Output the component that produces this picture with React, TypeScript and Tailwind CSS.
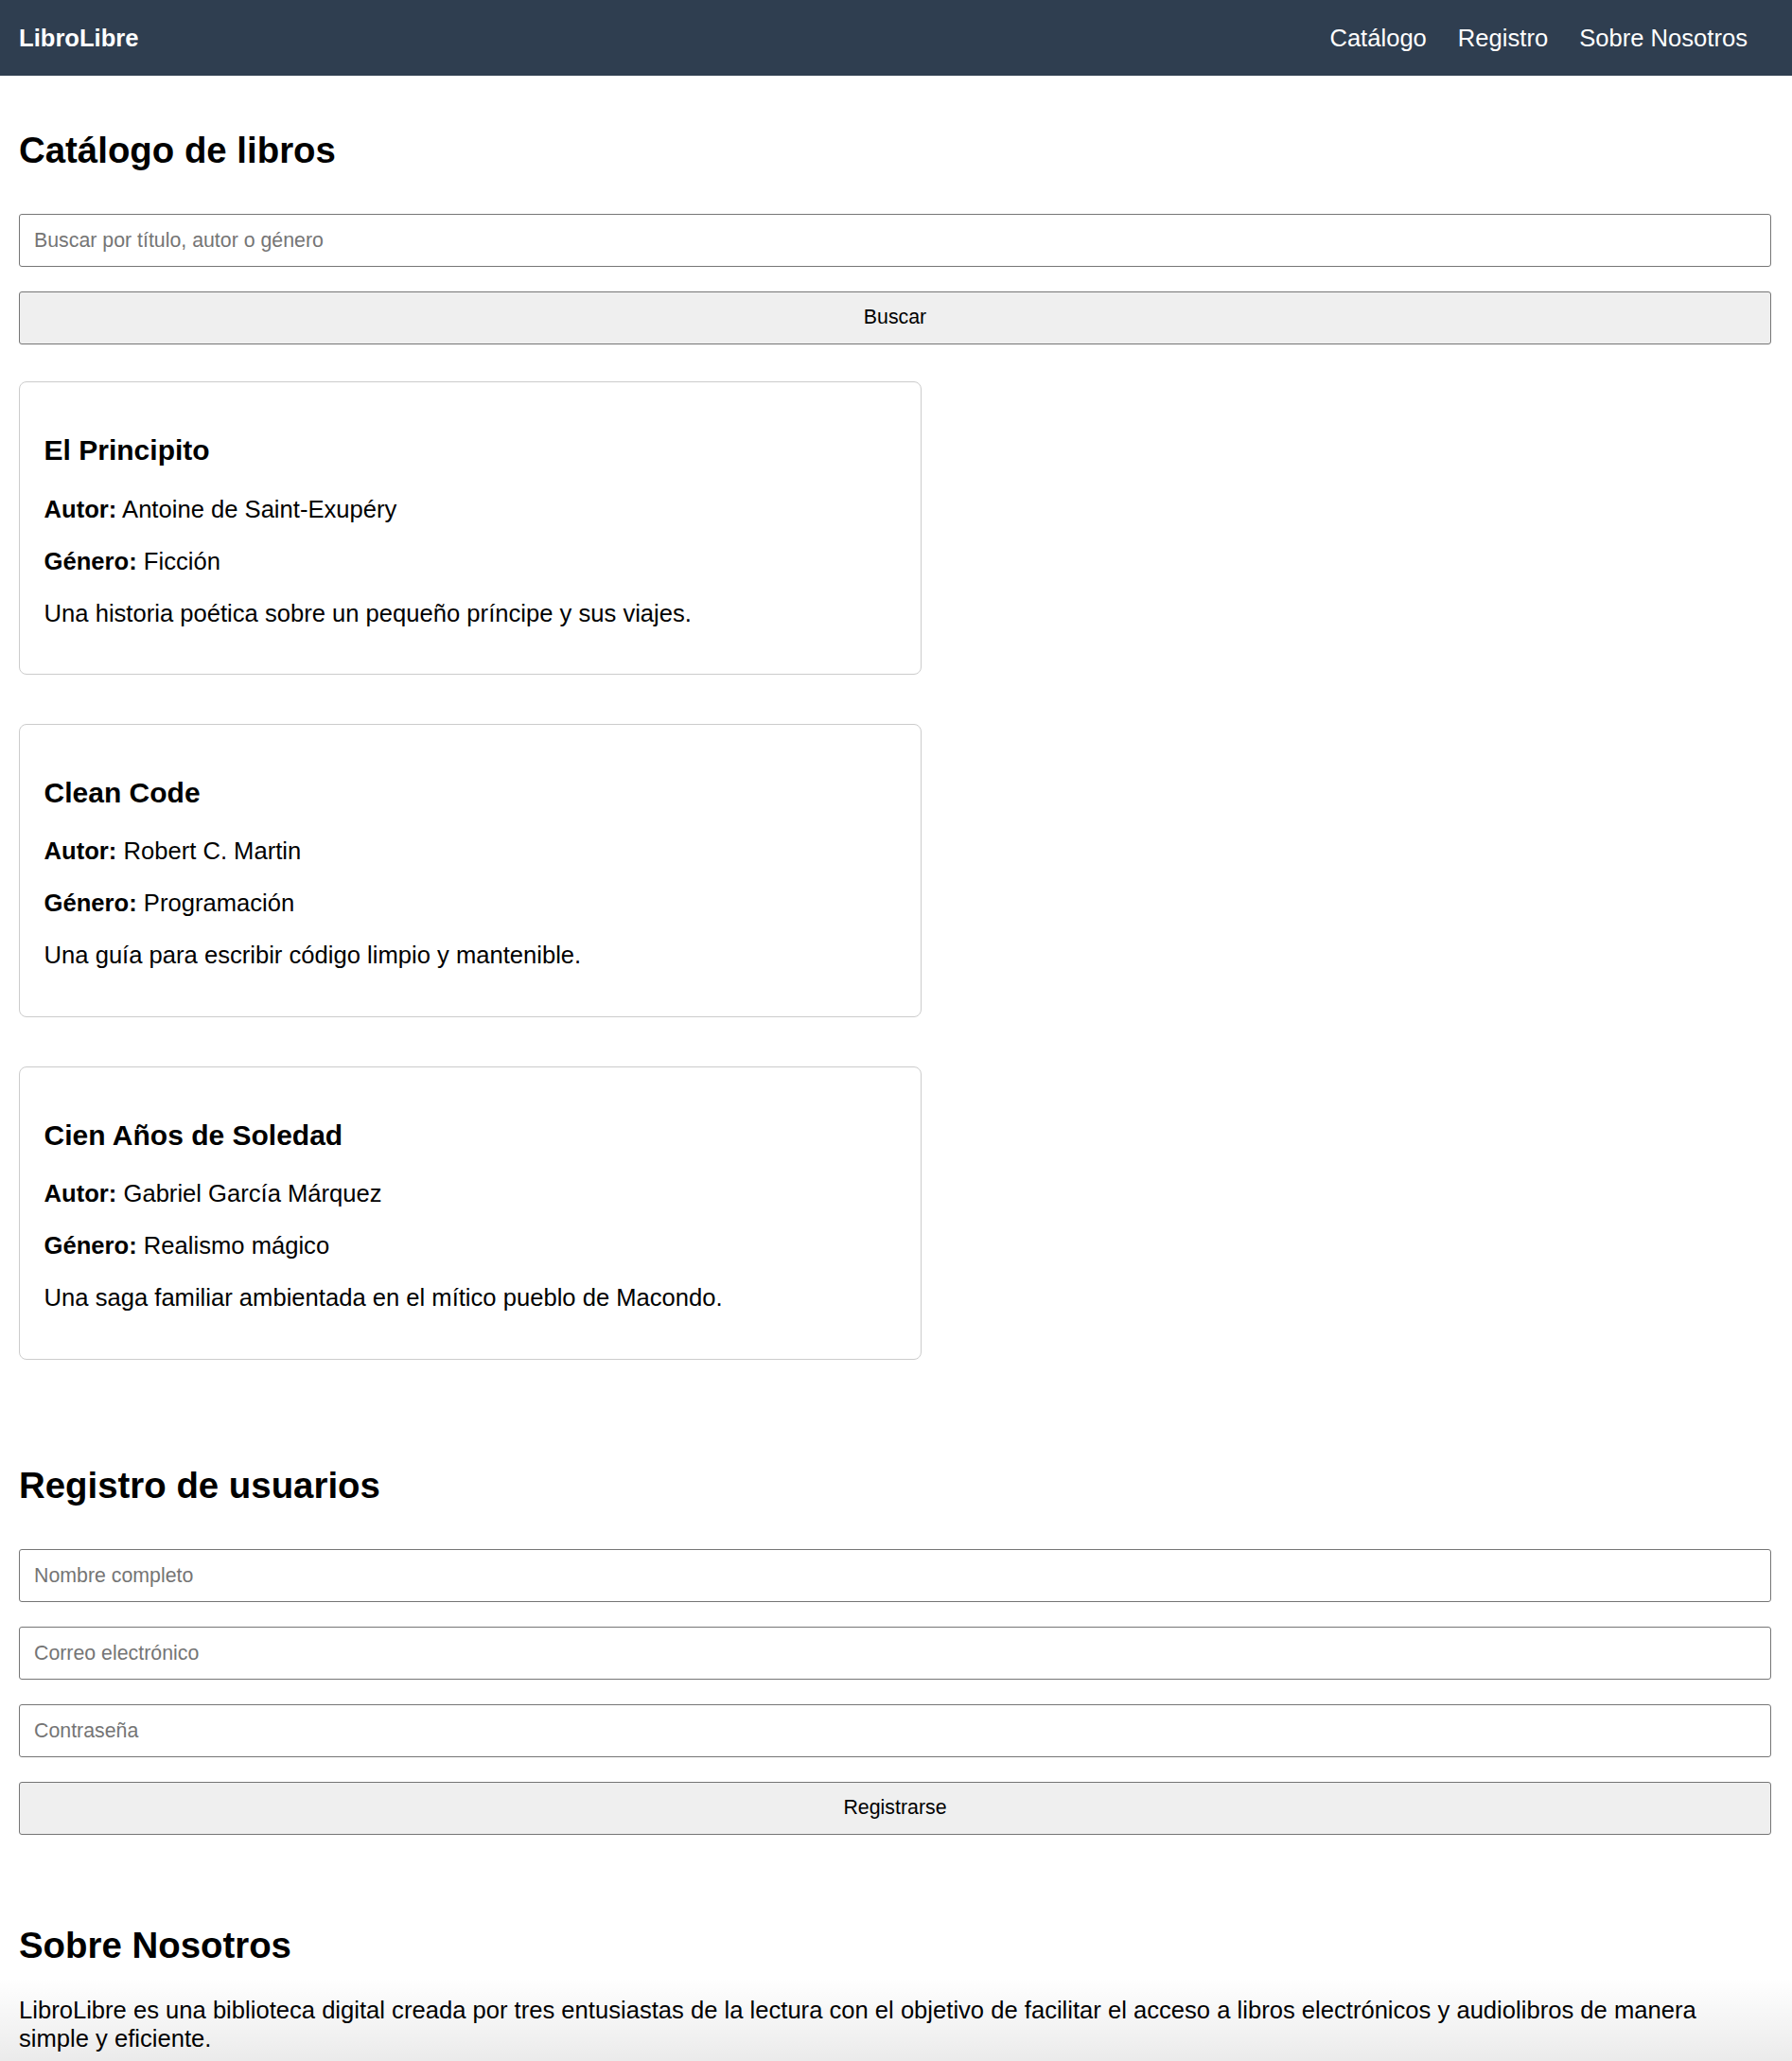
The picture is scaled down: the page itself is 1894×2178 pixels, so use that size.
import React from "react";

const books = [
  {
    title: "El Principito",
    author: "Antoine de Saint-Exupéry",
    genre: "Ficción",
    desc: "Una historia poética sobre un pequeño príncipe y sus viajes.",
  },
  {
    title: "Clean Code",
    author: "Robert C. Martin",
    genre: "Programación",
    desc: "Una guía para escribir código limpio y mantenible.",
  },
  {
    title: "Cien Años de Soledad",
    author: "Gabriel García Márquez",
    genre: "Realismo mágico",
    desc: "Una saga familiar ambientada en el mítico pueblo de Macondo.",
  },
];

function TextInput({ placeholder, type = "text", className = "" }: { placeholder: string; type?: string; className?: string }) {
  return (
    <input
      type={type}
      placeholder={placeholder}
      className={
        "block w-full h-[56px] px-[15px] border border-[#767676] rounded-[3px] bg-white text-[21.33px] text-black placeholder:text-[#757575] outline-none " +
        className
      }
    />
  );
}

function Btn({ label, className = "" }: { label: string; className?: string }) {
  return (
    <button
      type="button"
      className={
        "block w-full h-[56px] border border-[#767676] rounded-[3px] bg-[#efefef] text-[21.33px] text-black " +
        className
      }
    >
      {label}
    </button>
  );
}

export default function App() {
  return (
    <div
      className="relative h-[2178px] overflow-hidden bg-white text-black"
      style={{ fontFamily: '"Liberation Sans", Arial, Helvetica, sans-serif' }}
    >
      <nav className="h-[80px] bg-[#2f3e50] flex items-center justify-between pl-[20px] pr-[47px] text-white">
        <span className="text-[25.6px] font-bold leading-[29px]">LibroLibre</span>
        <div className="flex gap-[33px] text-[25.6px] leading-[29px]">
          <a className="text-white">Catálogo</a>
          <a className="text-white">Registro</a>
          <a className="text-white">Sobre Nosotros</a>
        </div>
      </nav>

      <main className="pl-[20px] pr-[22px]">
        <section>
          <h2 className="mt-[57px] text-[38.4px] font-bold leading-[44px]">Catálogo de libros</h2>
          <TextInput placeholder="Buscar por título, autor o género" className="mt-[45px]" />
          <Btn label="Buscar" className="mt-[26px]" />
          <div className="mt-[39px] flex flex-col gap-[51.5px]">
            {books.map((b) => (
              <div key={b.title} className="w-[954px] border border-[#cccccc] rounded-[8px] px-[25.6px] pt-[25px] pb-[49.5px]">
                <h3 className="mt-[30px] text-[30px] font-bold leading-[34.5px]">{b.title}</h3>
                <p className="mt-[30px] text-[25.6px] leading-[29.4px]">
                  <strong className="font-bold">Autor:</strong> {b.author}
                </p>
                <p className="mt-[25.6px] text-[25.6px] leading-[29.4px]">
                  <strong className="font-bold">Género:</strong> {b.genre}
                </p>
                <p className="mt-[25.6px] text-[25.6px] leading-[29.4px]">{b.desc}</p>
              </div>
            ))}
          </div>
        </section>

        <section>
          <h2 className="mt-[110.5px] text-[38.4px] font-bold leading-[44px]">Registro de usuarios</h2>
          <TextInput placeholder="Nombre completo" className="mt-[45.5px]" />
          <TextInput placeholder="Correo electrónico" type="email" className="mt-[26px]" />
          <TextInput placeholder="Contraseña" type="password" className="mt-[26px]" />
          <Btn label="Registrarse" className="mt-[26px]" />
        </section>

        <section>
          <h2 className="mt-[95px] text-[38.4px] font-bold leading-[44px]">Sobre Nosotros</h2>
          <p className="mt-[32px] max-w-[1820px] text-[25.6px] leading-[29.4px]">
            LibroLibre es una biblioteca digital creada por tres entusiastas de la lectura con el objetivo de facilitar el acceso a libros electrónicos y audiolibros de manera simple y eficiente.
          </p>
        </section>
      </main>

      <div className="pointer-events-none absolute bottom-0 left-0 right-0 h-[88px] bg-linear-to-b from-transparent to-black/8" />
    </div>
  );
}
